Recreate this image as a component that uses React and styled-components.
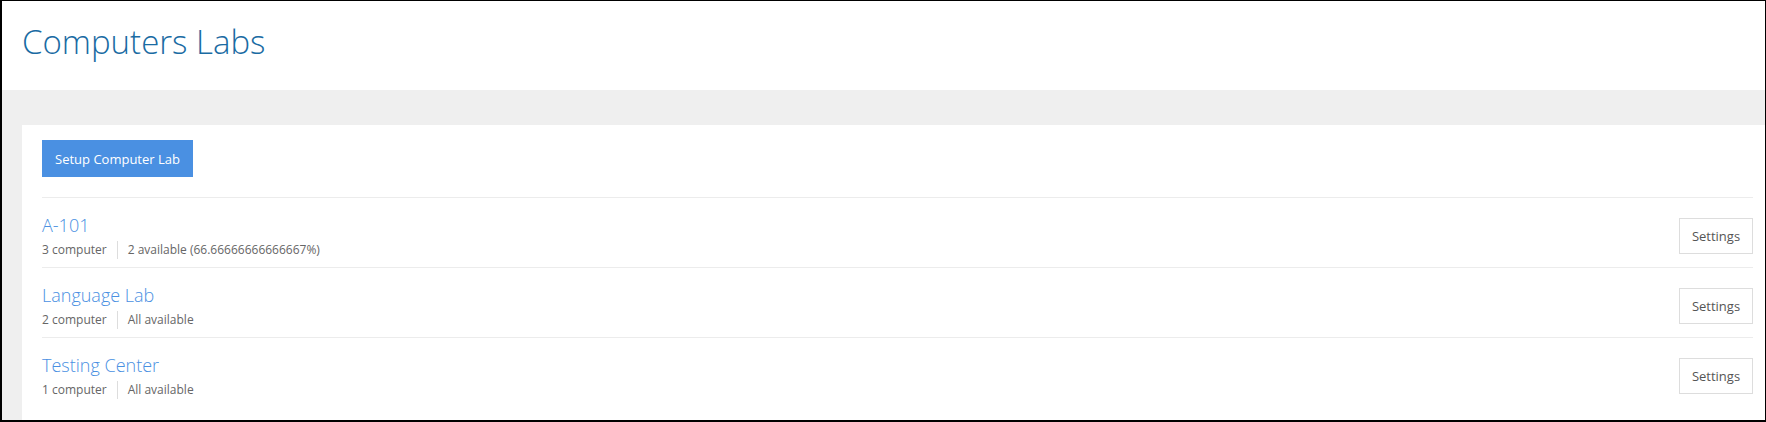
import React from "react";
import styled, { createGlobalStyle } from "styled-components";

const Global = createGlobalStyle`
  html, body { margin: 0; padding: 0; background: #fff; }
  body { font-family: "Open Sans", "Liberation Sans", sans-serif; }
  * { box-sizing: border-box; }
`;

const Frame = styled.div`
  width: 1766px;
  height: 422px;
  border: 1px solid #000;
  border-left-width: 2px;
  border-bottom-width: 2px;
  overflow: hidden;
  display: flex;
  flex-direction: column;
  background: #efefef;
`;

const Header = styled.header`
  height: 89px;
  background: #fff;
  padding-left: 20px;
  display: flex;
  align-items: flex-start;
`;

const Title = styled.h1`
  margin: 0;
  margin-top: 21px;
  font-size: 33px;
  line-height: 40px;
  font-weight: 300;
  color: #1a6ba3;
`;

const Main = styled.main`
  flex: 1;
  padding: 35px 0 0 20px;
  display: flex;
`;

const Card = styled.section`
  flex: 1;
  background: #fff;
  padding: 15px 12px 0 20px;
`;

const Toolbar = styled.div`
  padding-bottom: 20px;
  border-bottom: 1px solid #ececec;
`;

const PrimaryButton = styled.button`
  height: 37px;
  width: 151px;
  border: none;
  background: #4a90e2;
  color: #fff;
  font-family: inherit;
  font-size: 13px;
  padding: 0;
  cursor: pointer;
`;

const Row = styled.div`
  display: flex;
  align-items: center;
  justify-content: space-between;
  padding: 15px 0 8px;
  border-bottom: 1px solid #ececec;
  &:last-child {
    border-bottom: none;
  }
`;

const Info = styled.div`
  display: flex;
  flex-direction: column;
`;

const LabName = styled.a`
  font-size: 18px;
  line-height: 24px;
  font-weight: 300;
  color: #4a90e2;
  text-decoration: none;
`;

const Meta = styled.div`
  margin-top: 4px;
  display: flex;
  align-items: center;
  font-size: 12px;
  line-height: 18px;
  color: #666;
`;

const MetaItem = styled.span`
  padding: 0 10px;
  border-left: 1px solid #ddd;
  &:first-child {
    padding-left: 0;
    border-left: none;
  }
`;

const SettingsButton = styled.button`
  width: 74px;
  height: 36px;
  background: #fff;
  border: 1px solid #ddd;
  font-family: inherit;
  font-size: 13px;
  color: #555;
  padding: 0;
  cursor: pointer;
`;

const labs = [
  { name: "A-101", count: "3 computer", avail: "2 available (66.66666666666667%)" },
  { name: "Language Lab", count: "2 computer", avail: "All available" },
  { name: "Testing Center", count: "1 computer", avail: "All available" },
];

export default function App() {
  return (
    <>
      <Global />
      <Frame>
        <Header>
          <Title>Computers Labs</Title>
        </Header>
        <Main>
          <Card>
            <Toolbar>
              <PrimaryButton>Setup Computer Lab</PrimaryButton>
            </Toolbar>
            {labs.map((l) => (
              <Row key={l.name}>
                <Info>
                  <LabName href="#">{l.name}</LabName>
                  <Meta>
                    <MetaItem>{l.count}</MetaItem>
                    <MetaItem>{l.avail}</MetaItem>
                  </Meta>
                </Info>
                <SettingsButton>Settings</SettingsButton>
              </Row>
            ))}
          </Card>
        </Main>
      </Frame>
    </>
  );
}
